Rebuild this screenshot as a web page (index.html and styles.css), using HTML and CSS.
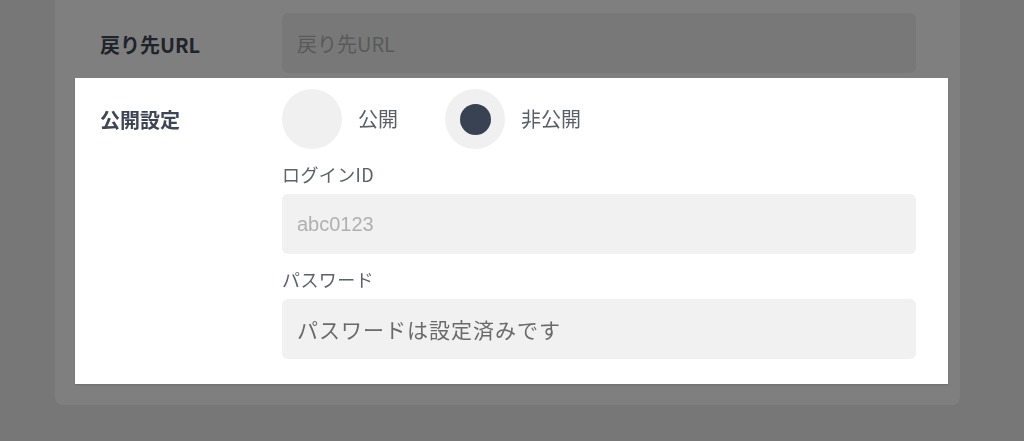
FILE: index.html
```html
<!DOCTYPE html>
<html lang="ja">
<head>
<meta charset="utf-8">
<title>公開設定</title>
<link rel="stylesheet" href="styles.css">
</head>
<body>
<div class="card">
  <div class="row row-url">
    <div class="row-label">戻り先URL</div>
    <div class="row-body">
      <input class="field" type="text" placeholder="戻り先URL">
    </div>
  </div>
  <div class="row row-public spotlight">
    <div class="row-label row-label-top">公開設定</div>
    <div class="row-body">
      <div class="radios">
        <label class="radio">
          <span class="radio-circle"></span>
          <span class="radio-text">公開</span>
        </label>
        <label class="radio">
          <span class="radio-circle is-checked"><span class="radio-dot"></span></span>
          <span class="radio-text">非公開</span>
        </label>
      </div>
      <div class="field-label">ログインID</div>
      <input class="field field-latin" type="text" placeholder="abc0123">
      <div class="field-label">パスワード</div>
      <input class="field field-value" type="text" value="パスワードは設定済みです">
    </div>
  </div>
</div>
<div class="overlay"></div>
</body>
</html>
```
FILE: styles.css
```css
html, body {
  margin: 0;
  padding: 0;
}
body {
  background: #eeeeee;
  font-family: "Noto Sans CJK JP", "Noto Sans", sans-serif;
  width: 1024px;
  height: 441px;
  overflow: hidden;
}
.card {
  margin-left: 55px;
  width: 905px;
  box-sizing: border-box;
  background: #ffffff;
  border-radius: 0 0 8px 8px;
  padding: 13px 12px 21px 20px;
}
.row {
  display: grid;
  grid-template-columns: 182px 1fr;
  padding: 0 32px 0 25px;
  background: #ffffff;
}
.row-url {
  margin-bottom: 5px;
  height: 60px;
  align-items: center;
}
.row-label {
  font-size: 20px;
  font-weight: 700;
  color: #3e4656;
  line-height: 60px;
}
.row-url .row-label {
  padding-top: 3px;
  line-height: 57px;
}
.row-label-top {
  align-self: start;
  line-height: 62px;
}
.row-body {
  display: flex;
  flex-direction: column;
}
.field {
  display: block;
  width: 100%;
  height: 60px;
  box-sizing: border-box;
  border: none;
  outline: none;
  border-radius: 6px;
  background: #f1f1f1;
  padding: 0 15px;
  font-family: "Noto Sans CJK JP", sans-serif;
  font-size: 20px;
  color: #666666;
}
.field::placeholder {
  color: #b4b4b4;
}
.field-latin {
  font-family: "Liberation Sans", "Noto Sans CJK JP", sans-serif;
}
.field-latin::placeholder {
  color: #b0b0b0;
}
.field-value {
  font-size: 21px;
  letter-spacing: 1px;
  color: #6a6a6a;
}
.spotlight {
  position: relative;
  z-index: 2;
  padding-top: 11px;
  padding-bottom: 25px;
  box-shadow: 0 1px 2px rgba(0, 0, 0, 0.15);
}
.radios {
  display: flex;
  align-items: center;
  gap: 47px;
  height: 60px;
}
.radio {
  display: flex;
  align-items: center;
  gap: 16px;
}
.radio-circle {
  width: 60px;
  height: 60px;
  border-radius: 50%;
  background: #f0f0f0;
  display: flex;
  align-items: center;
  justify-content: center;
}
.radio-dot {
  width: 31px;
  height: 31px;
  border-radius: 50%;
  background: #394253;
}
.radio-text {
  font-size: 20px;
  color: #585d66;
  line-height: 28px;
}
.field-label {
  font-size: 18px;
  line-height: 26px;
  color: #5c6068;
  margin: 12px 0 7px;
  letter-spacing: 0.4px;
}
.overlay {
  position: fixed;
  inset: 0;
  background: rgba(0, 0, 0, 0.5);
  z-index: 1;
}
```
